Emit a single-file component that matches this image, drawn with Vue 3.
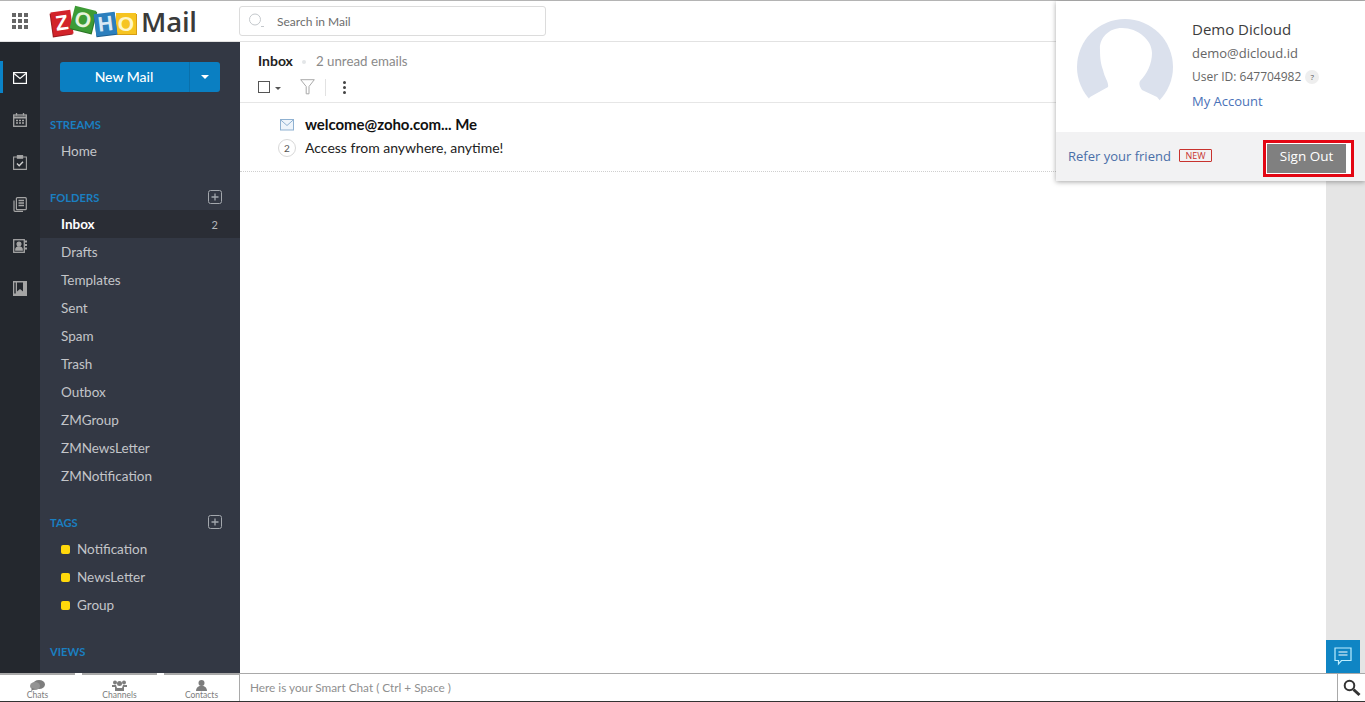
<script setup>
const streams = ["Home"];
const folders = [
  { name: "Inbox", count: 2, active: true },
  { name: "Drafts" },
  { name: "Templates" },
  { name: "Sent" },
  { name: "Spam" },
  { name: "Trash" },
  { name: "Outbox" },
  { name: "ZMGroup" },
  { name: "ZMNewsLetter" },
  { name: "ZMNotification" },
];
const tags = ["Notification", "NewsLetter", "Group"];
</script>

<template>
  <div class="page">
    <header class="topbar">
      <div class="apps">
        <i v-for="n in 9" :key="n"></i>
      </div>
      <div class="logo">
        <span class="tile red">Z</span>
        <span class="tile green">O</span>
        <span class="tile blue">H</span>
        <span class="tile yellow">O</span>
        <span class="logo-mail">Mail</span>
      </div>
      <div class="search">
        <svg width="20" height="18" viewBox="0 0 20 18" fill="none" stroke="#c4c8cc" stroke-width="1">
          <circle cx="6" cy="7.500" r="5.500" />
          <path d="M12 14.500h3" />
        </svg>
        <span>Search in Mail</span>
      </div>
    </header>

    <div class="body">
      <nav class="rail">
        <div class="rail-item active">
          <svg width="14" height="12" viewBox="0 0 14 12" fill="none" stroke="#fff" stroke-width="1.200">
            <rect x=".6" y=".6" width="12.800" height="10.800" />
            <path d="M1 1.500l6 5 6-5" />
          </svg>
        </div>
        <div class="rail-item">
          <svg width="14" height="14" viewBox="0 0 14 14" fill="none" stroke="#a5a5a5" stroke-width="1.300">
            <rect x=".7" y="2" width="12.600" height="11.300" />
            <path d="M.7 4.500h12.600" stroke-width="2" />
            <path d="M3.500 0v2.500M10.500 0v2.500" />
            <path d="M3 7.500h8M3 10h8" stroke-dasharray="2 1" stroke-width="1.400" />
          </svg>
        </div>
        <div class="rail-item">
          <svg width="14" height="15" viewBox="0 0 14 15" fill="none" stroke="#a5a5a5" stroke-width="1.100">
            <path d="M4 2H.6v12.400h12.800V2H10" />
            <rect x="4.400" y=".6" width="5.200" height="2.600" fill="#a5a5a5" />
            <path d="M4 8.500l2.200 2.200L10 6.800" stroke="#d0d0d0" stroke-width="1.400" />
          </svg>
        </div>
        <div class="rail-item">
          <svg width="14" height="15" viewBox="0 0 14 15" fill="none" stroke="#a5a5a5" stroke-width="1.200">
            <path d="M1 3.500v9.800q0 1 1 1h8" />
            <rect x="3.400" y=".7" width="9.900" height="12" rx="1" />
            <path d="M5.500 3.500h5.500M5.500 6h5.500M5.500 8.500h5.500" stroke-width="1.400" />
          </svg>
        </div>
        <div class="rail-item">
          <svg width="14" height="14" viewBox="0 0 14 14" fill="none" stroke="#a5a5a5" stroke-width="1.300">
            <rect x=".7" y=".7" width="10.600" height="12.600" />
            <circle cx="6" cy="5" r="1.900" fill="#a5a5a5" />
            <path d="M2.800 11c0-4 6.400-4 6.400 0z" fill="#a5a5a5" />
            <path d="M12 2.500h2M12 6h2M12 9.500h2" stroke-width="2" />
          </svg>
        </div>
        <div class="rail-item">
          <svg width="14" height="15" viewBox="0 0 14 15">
            <rect x="0" y="0" width="14" height="15" fill="#a5a5a5" />
            <path d="M4 1.500h6v9L7 8l-3 2.500z" fill="#24282e" />
            <rect x="1.300" y="1.500" width="1.400" height="11" fill="#24282e" />
          </svg>
        </div>
      </nav>

      <aside class="side">
        <div class="new-mail">
          <span class="new-label">New Mail</span>
          <span class="new-caret"><i></i></span>
        </div>

        <div class="side-head first">STREAMS</div>
        <div v-for="s in streams" :key="s" class="side-row">{{ s }}</div>

        <div class="side-head folders">
          FOLDERS
          <svg width="14" height="14" viewBox="0 0 14 14" fill="none" stroke="#a3a7ad" stroke-width="1">
            <rect x=".5" y=".5" width="13" height="13" rx="2" />
            <path d="M3.500 7h7M7 3.500v7" stroke-width="1.300" />
          </svg>
        </div>
        <div v-for="f in folders" :key="f.name" class="side-row" :class="{ active: f.active }">
          <span>{{ f.name }}</span>
          <span v-if="f.count" class="count">{{ f.count }}</span>
        </div>

        <div class="side-head tags">
          TAGS
          <svg width="14" height="14" viewBox="0 0 14 14" fill="none" stroke="#a3a7ad" stroke-width="1">
            <rect x=".5" y=".5" width="13" height="13" rx="2" />
            <path d="M3.500 7h7M7 3.500v7" stroke-width="1.300" />
          </svg>
        </div>
        <div v-for="t in tags" :key="t" class="side-row tag"><i></i>{{ t }}</div>

        <div class="side-head views">VIEWS</div>
      </aside>

      <main class="main">
        <div class="list">
          <div class="toolbar">
            <div class="crumb">
              <strong>Inbox</strong>
              <i class="dot"></i>
              <span>2 unread emails</span>
            </div>
            <div class="tools">
              <span class="check"></span>
              <i class="caret"></i>
              <svg class="funnel" width="15" height="16" viewBox="0 0 15 16" fill="none" stroke="#a9a9a9" stroke-width="1">
                <path d="M.7.700h13.600L9 7.500v7.300H6.200V7.500z" />
              </svg>
              <span class="sep"></span>
              <span class="more"><i></i><i></i><i></i></span>
            </div>
          </div>
          <div class="mail">
            <div class="mail-icons">
              <svg width="14" height="12" viewBox="0 0 14 12" fill="#eef4fa" stroke="#8fb1d1" stroke-width="1">
                <rect x=".5" y=".5" width="13" height="10.500" />
                <path d="M.8 1l6.200 5.500L13.200 1" fill="none" />
              </svg>
              <span class="thread">2</span>
            </div>
            <div class="mail-text">
              <div class="mail-from">welcome@zoho.com... Me</div>
              <div class="mail-subject">Access from anywhere, anytime!</div>
            </div>
          </div>
        </div>
        <div class="strip"></div>

        <div class="chat-btn">
          <svg width="18" height="19" viewBox="0 0 18 19" fill="none" stroke="#bdeeff" stroke-width="1.200">
            <path d="M1 1h16v12.500H7.500L4.500 17v-3.500H1z" />
            <path d="M4.500 5h9M4.500 8h9" stroke="#fff" />
          </svg>
        </div>

        <div class="popup">
          <div class="popup-top">
            <svg class="avatar" width="96" height="96" viewBox="0 0 96 96">
              <circle cx="48" cy="48" r="48" fill="#dbe1ed" />
              <path fill="#fff" d="M45 9C31 9 22 20 23 31c0 9 1 15 3 20 2 9 6 12 5 17L13 78 0 97h96L80 78 65 71c-3-4-3-7-2-9 7-7 12-17 12-28C75 21 61 9 45 9z" />
            </svg>
            <div class="who">
              <div class="who-name">Demo Dicloud</div>
              <div class="who-mail">demo@dicloud.id</div>
              <div class="who-id">User ID: 647704982 <span class="qm">?</span></div>
              <div class="who-link">My Account</div>
            </div>
          </div>
          <div class="popup-foot">
            <span class="refer">Refer your friend</span>
            <span class="new-tag">NEW</span>
            <span class="signout-frame"><span class="signout">Sign Out</span></span>
          </div>
        </div>
      </main>
    </div>

    <footer class="bottom">
      <div class="tabs">
        <div class="tab">
          <svg width="15" height="11" viewBox="0 0 15 11" fill="#7d7d7d">
            <ellipse cx="9" cy="4.500" rx="6" ry="4.500" />
            <ellipse cx="5" cy="6" rx="5" ry="4" fill="#949494" />
            <path d="M2 8l-1 3 4-2z" />
          </svg>
          <span>Chats</span>
        </div>
        <div class="tab">
          <svg width="15" height="11" viewBox="0 0 15 11" fill="#7d7d7d">
            <circle cx="3" cy="2.500" r="2" />
            <circle cx="12" cy="2.500" r="2" />
            <circle cx="7.500" cy="3.500" r="2.500" />
            <path d="M0 5h4l1 3h5l1-3h4v2h-3v4H3V7H0z" />
          </svg>
          <span>Channels</span>
        </div>
        <div class="tab">
          <svg width="11" height="11" viewBox="0 0 11 11" fill="#7d7d7d">
            <circle cx="5.500" cy="3" r="3" />
            <path d="M0 11c0-7 11-7 11 0z" />
          </svg>
          <span>Contacts</span>
        </div>
      </div>
      <div class="smart">Here is your Smart Chat ( Ctrl + Space )</div>
      <div class="smart-search">
        <svg width="18" height="18" viewBox="0 0 18 18" fill="none" stroke="#333" stroke-width="2">
          <circle cx="6.500" cy="6.500" r="4.800" />
          <path d="M10.500 10.500l6 5.500" stroke-width="3" />
        </svg>
      </div>
    </footer>
  </div>
</template>

<style>
html, body { margin: 0; overflow: hidden; }
</style>

<style scoped>
.page {
  width: 1365px;
  height: 702px;
  display: flex;
  flex-direction: column;
  font-family: Lato, "Open Sans", sans-serif;
  background: #fff;
  overflow: hidden;
}

/* top */
.topbar {
  height: 40px;
  box-sizing: content-box;
  border-top: 1px solid #b4b4b4;
  border-bottom: 1px solid #e2e2e2;
  display: flex;
  align-items: center;
  flex-shrink: 0;
}
.apps {
  display: grid;
  grid-template-columns: repeat(3, 4px);
  gap: 2px;
  margin-left: 12px;
}
.apps i { width: 4px; height: 4px; background: #666; }
.logo {
  display: flex;
  align-items: center;
  margin-left: 22px;
  width: 189px;
  height: 40px;
  flex-shrink: 0;
}
.tile {
  display: block;
  text-align: center;
  font-family: "Liberation Sans", sans-serif;
  font-weight: 700;
  color: #fff;
  font-size: 21px;
}
.tile.red {
  width: 20px; height: 24px; line-height: 24px;
  background: #d2232a; transform: rotate(-8deg); margin: 3px 0 0 2px;
  box-shadow: -1px 1px 0 #9c1a20;
}
.tile.green {
  width: 22px; height: 23px; line-height: 23px;
  background: #3d9b35; color: #e6f3dc; transform: rotate(14deg); margin: -4px 0 0 0;
  box-shadow: 1px 1px 0 #2a7424;
}
.tile.blue {
  width: 21px; height: 22px; line-height: 22px;
  background: #2c7fbd; color: #d8e9f5; transform: rotate(-7deg); margin: 5px 0 0 1px;
  box-shadow: 0 1px 0 #1e5f90;
}
.tile.yellow {
  width: 20px; height: 21px; line-height: 21px;
  background: #f6c421; color: #fff6c8; margin: 4px 0 0 0;
  box-shadow: 1px 1px 0 #d69d14;
}
.logo-mail {
  font-family: "Open Sans", sans-serif;
  font-size: 27.500px;
  font-weight: 600;
  color: #3a3a3a;
  margin-left: 5px;
  letter-spacing: -0.2px;
}
.search {
  width: 296px;
  height: 28px;
  border: 1px solid #dcdcdc;
  border-radius: 3px;
  display: flex;
  align-items: center;
  padding-left: 9px;
  box-sizing: content-box;
  font-size: 12px;
  color: #6d6d6d;
  flex-shrink: 0;
}
.search span { margin-left: 8px; }

/* body */
.body { flex: 1; display: flex; min-height: 0; position: relative; }

.rail {
  width: 40px;
  background: #24282e;
  flex-shrink: 0;
  padding-top: 15px;
  box-sizing: border-box;
}
.rail-item {
  height: 42px;
  display: flex;
  align-items: center;
  justify-content: center;
  position: relative;
}
.rail-item.active::before {
  content: "";
  position: absolute;
  left: 0;
  top: 4px;
  width: 3px;
  height: 32px;
  background: #0a83c8;
}

.side {
  width: 200px;
  background: #333844;
  flex-shrink: 0;
  color: #c3c5c9;
  font-size: 13.500px;
  overflow: hidden;
}
.new-mail {
  margin: 20px 20px 0;
  height: 30px;
  display: flex;
  background: #0a7fc2;
  border-radius: 3px;
  color: #fff;
}
.new-label {
  flex: 1;
  text-align: center;
  line-height: 30px;
  font-size: 14px;
  font-weight: 500;
  padding-right: 1px;
}
.new-caret {
  width: 30px;
  border-left: 1px solid #0a70ab;
  display: flex;
  align-items: center;
  justify-content: center;
}
.new-caret i {
  border-left: 4px solid transparent;
  border-right: 4px solid transparent;
  border-top: 4px solid #fff;
}
.side-head {
  display: flex;
  align-items: center;
  justify-content: space-between;
  padding: 0 18px 0 10px;
  font-size: 11.200px;
  font-weight: 700;
  color: #1a7fc1;
  height: 16px;
}
.side-head.first { margin-top: 24px; }
.side-head.folders { margin-top: 24px; }
.side-head.tags { margin-top: 24px; }
.side-head.views { margin-top: 24px; }
.side-row {
  height: 28px;
  display: flex;
  align-items: center;
  justify-content: space-between;
  padding: 0 22px 0 21px;
}
.side-head.first + .side-row,
.side-head.folders + .side-row,
.side-head.tags + .side-row { margin-top: 5px; }
.side-row.active {
  background: #2a2d35;
  color: #fff;
  font-weight: 700;
}
.count { font-size: 11px; font-weight: 400; color: #b5b7bb; }
.side-row.tag { justify-content: flex-start; }
.side-row.tag i {
  width: 9px;
  height: 9px;
  border-radius: 2px;
  background: #ffd80b;
  margin-right: 7px;
}

.main { flex: 1; display: flex; position: relative; min-width: 0; }
.list { flex: 1; min-width: 0; }
.strip { width: 39px; background: #e5e5e5; }

.toolbar {
  height: 61px;
  box-sizing: border-box;
  border-bottom: 1px solid #e6e6e6;
  padding: 10px 0 0 18px;
}
.crumb {
  display: flex;
  align-items: center;
  font-size: 13.300px;
  line-height: 18px;
  color: #8a8a8a;
}
.crumb strong { color: #222; font-weight: 700; font-size: 14px; }
.dot {
  width: 4px;
  height: 4px;
  border-radius: 50%;
  background: #e3e6e8;
  margin: 2px 10px 0 9px;
}
.tools {
  display: flex;
  align-items: center;
  margin-top: 6px;
  height: 22px;
}
.check {
  width: 10px;
  height: 10px;
  border: 1px solid #555;
  flex-shrink: 0;
}
.caret {
  border-left: 3px solid transparent;
  border-right: 3px solid transparent;
  border-top: 3px solid #555;
  margin: 2px 0 0 5px;
}
.funnel { margin-left: 19px; }
.sep { width: 1px; height: 17px; background: #e2e2e2; margin-left: 10px; }
.more {
  display: flex;
  flex-direction: column;
  gap: 2px;
  margin-left: 17px;
}
.more i { width: 3px; height: 3px; background: #444; border-radius: 50%; }

.mail {
  height: 69px;
  box-sizing: border-box;
  border-bottom: 1px dotted #cfcfcf;
  display: flex;
  padding: 12px 0 0 38px;
}
.mail-icons {
  width: 27px;
  display: flex;
  flex-direction: column;
  align-items: flex-start;
  padding: 4px 0 0 2px;
  box-sizing: border-box;
}
.thread {
  width: 16px;
  height: 16px;
  margin: 8px 0 0 -2px;
  border: 1px solid #d8d8d8;
  border-radius: 50%;
  font-size: 10px;
  line-height: 16px;
  text-align: center;
  color: #555;
}
.mail-from {
  font-size: 15px;
  font-weight: 700;
  letter-spacing: -0.05px;
  color: #111;
  line-height: 18px;
}
.mail-subject {
  font-size: 14px;
  color: #222;
  line-height: 18px;
  margin-top: 6px;
}

.chat-btn {
  position: absolute;
  right: 5px;
  bottom: 0;
  width: 34px;
  height: 33px;
  background: #0f85c4;
  display: flex;
  align-items: center;
  justify-content: center;
}

.popup {
  position: absolute;
  right: 0;
  top: -41px;
  width: 309px;
  height: 180px;
  background: #fff;
  box-shadow: 0 1px 5px rgba(0, 0, 0, 0.35);
  display: flex;
  flex-direction: column;
  font-family: "Open Sans", sans-serif;
}
.popup-top {
  height: 131px;
  display: flex;
  padding: 18px 0 0 21px;
  box-sizing: border-box;
  flex-shrink: 0;
}
.avatar { flex-shrink: 0; }
.who { margin-left: 19px; }
.who-name { font-size: 15px; line-height: 20px; color: #3d3d3d; }
.who-mail { font-size: 13px; line-height: 18px; color: #666; margin-top: 5px; }
.who-id {
  font-size: 12px;
  line-height: 18px;
  color: #666;
  margin-top: 6px;
  display: flex;
  align-items: center;
  gap: 4px;
}
.qm {
  width: 14px;
  height: 14px;
  border-radius: 50%;
  background: #eee;
  font-size: 8px;
  line-height: 14px;
  text-align: center;
  color: #555;
}
.who-link { font-size: 13px; line-height: 18px; color: #4a72b8; margin-top: 6px; }
.popup-foot {
  flex: 1;
  background: #f2f2f3;
  display: flex;
  align-items: center;
  padding: 0 0 2px 12px;
  position: relative;
}
.refer { font-size: 13px; color: #4a6fa8; }
.new-tag {
  margin-left: 8px;
  border: 1px solid #c8332e;
  border-radius: 1px;
  font-size: 9px;
  line-height: 11px;
  padding: 0 5.500px;
  color: #c8332e;
}
.signout-frame {
  position: absolute;
  left: 207px;
  top: 8px;
  width: 91px;
  height: 37px;
  border: 3px solid #e30613;
  box-sizing: border-box;
  background: #fff;
  padding: 1px 0 1px 1px;
}
.signout {
  display: block;
  width: 79px;
  height: 29px;
  background: #808080;
  color: #fff;
  font-size: 13.500px;
  font-weight: 500;
  line-height: 25px;
  text-align: center;
}

.bottom {
  height: 29px;
  flex-shrink: 0;
  display: flex;
  border-bottom: 1px solid #333;
  box-sizing: border-box;
  background: #fff;
}
.tabs {
  width: 240px;
  display: flex;
  gap: 7px;
  border-right: 1px solid #a9a9a9;
  box-sizing: border-box;
  flex-shrink: 0;
}
.tab {
  width: 75px;
  box-sizing: border-box;
  border-top: 2px solid #a9a9a9;
  display: flex;
  flex-direction: column;
  align-items: center;
  font-size: 8.500px;
  color: #7c7c7c;
  padding-top: 5px;
  line-height: 9px;
}
.smart {
  flex: 1;
  padding-left: 10px;
  font-size: 11.800px;
  color: #8f8f8f;
  line-height: 28px;
  border-top: 1px solid #a9a9a9;
}
.smart-search {
  width: 27px;
  border-left: 1px solid #a9a9a9;
  border-top: 1px solid #a9a9a9;
  display: flex;
  align-items: center;
  justify-content: center;
}
</style>
